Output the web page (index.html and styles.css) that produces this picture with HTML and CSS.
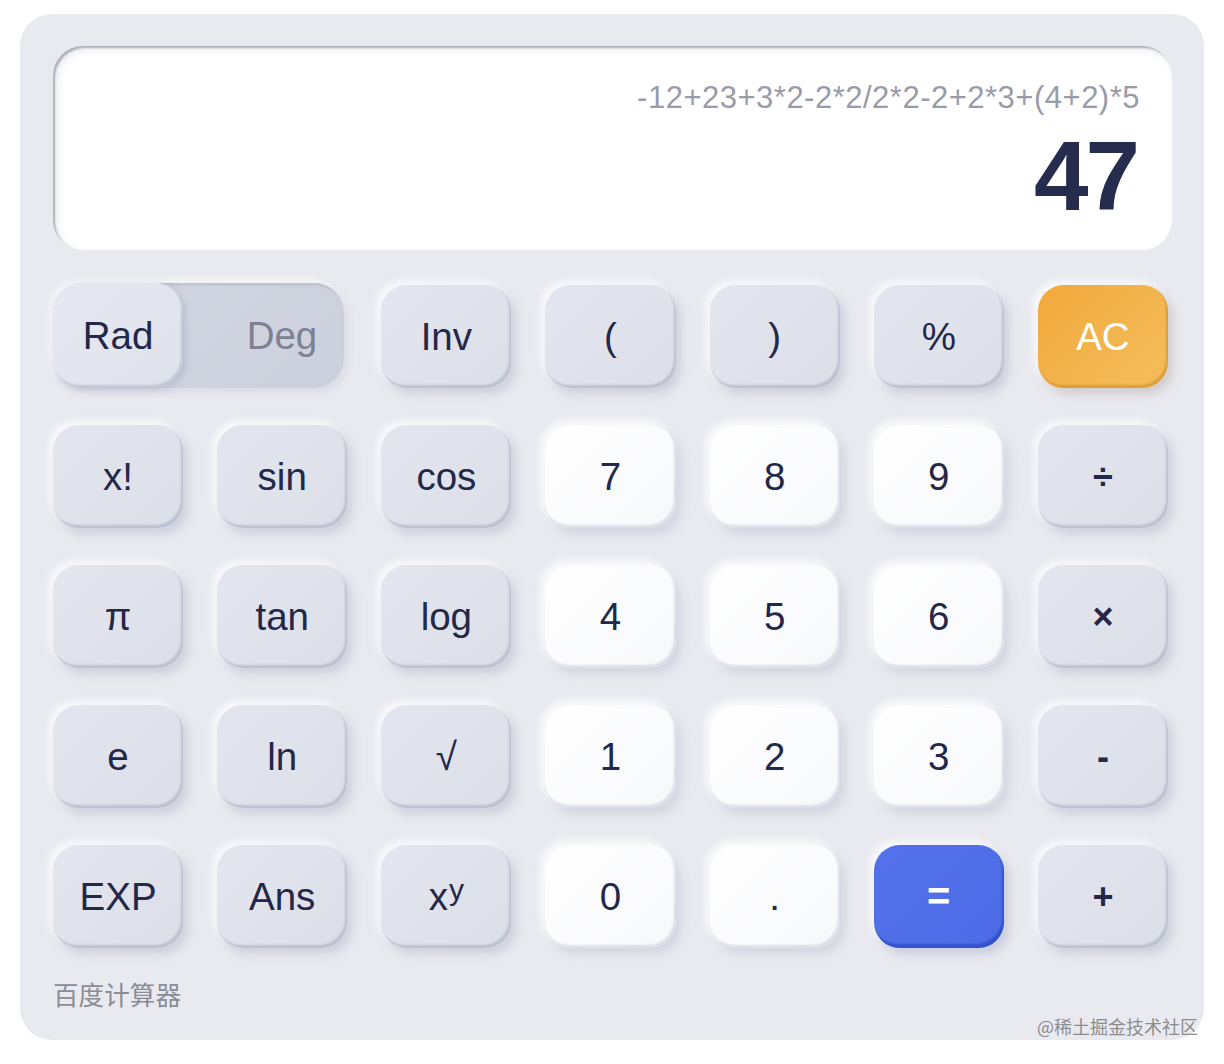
FILE: index.html
```html
<!DOCTYPE html>
<html lang="zh-CN">
<head>
<meta charset="utf-8">
<title>百度计算器</title>
<link rel="stylesheet" href="styles.css">
</head>
<body>
<div class="calc">
  <div class="display">
    <div class="expr">-12+23+3*2-2*2/2*2-2+2*3+(4+2)*5</div>
    <div class="result">47</div>
  </div>
  <div class="keys">
    <div class="toggle">
      <div class="tog-on">Rad</div>
      <div class="tog-off">Deg</div>
    </div>
    <div class="key fn">Inv</div>
    <div class="key fn">(</div>
    <div class="key fn">)</div>
    <div class="key fn">%</div>
    <div class="key ac">AC</div>

    <div class="key fn">x!</div>
    <div class="key fn">sin</div>
    <div class="key fn">cos</div>
    <div class="key num">7</div>
    <div class="key num">8</div>
    <div class="key num">9</div>
    <div class="key fn op">÷</div>

    <div class="key fn">π</div>
    <div class="key fn">tan</div>
    <div class="key fn">log</div>
    <div class="key num">4</div>
    <div class="key num">5</div>
    <div class="key num">6</div>
    <div class="key fn op">×</div>

    <div class="key fn">e</div>
    <div class="key fn">ln</div>
    <div class="key fn">√</div>
    <div class="key num">1</div>
    <div class="key num">2</div>
    <div class="key num">3</div>
    <div class="key fn op">-</div>

    <div class="key fn">EXP</div>
    <div class="key fn">Ans</div>
    <div class="key fn">x<sup>y</sup></div>
    <div class="key num">0</div>
    <div class="key num">.</div>
    <div class="key eq">=</div>
    <div class="key fn op">+</div>
  </div>
  <div class="footer">百度计算器</div>
</div>
<div class="watermark">@稀土掘金技术社区</div>
</body>
</html>
```
FILE: styles.css
```css
* { box-sizing: border-box; }
html, body { margin: 0; padding: 0; background: #ffffff; }
body {
  font-family: "Liberation Sans", Arial, "Noto Sans CJK SC", sans-serif;
  padding: 14px 20px 0 20px;
  width: 1224px;
  height: 1064px;
  position: relative;
  overflow: hidden;
}
.calc {
  width: 1184px;
  height: 1026px;
  background: #e9eaf0;
  border-radius: 32px;
  padding: 32px 32px 0 33px;
  display: flex;
  flex-direction: column;
}
.display {
  height: 204px;
  background: #ffffff;
  border-radius: 30px;
  box-shadow: inset 2px 2px 2px rgba(120, 124, 140, 0.55), inset 4px 4px 8px rgba(170, 174, 190, 0.25);
  padding: 33px 33px 0 0;
  display: flex;
  flex-direction: column;
  align-items: flex-end;
}
.expr {
  font-size: 31px;
  color: #9a9ba9;
  line-height: 38px;
  letter-spacing: 0.5px;
  margin-right: -1px;
}
.result {
  font-size: 98px;
  font-weight: bold;
  color: #262c4d;
  line-height: 100px;
  margin-top: 9px;
  letter-spacing: -3px;
  margin-right: 2px;
}
.keys {
  margin-top: 35px;
  margin-right: 4px;
  display: grid;
  grid-template-columns: repeat(7, 1fr);
  grid-auto-rows: 103px;
  column-gap: 34px;
  row-gap: 37px;
}
.key {
  border-radius: 26px;
  display: flex;
  align-items: center;
  justify-content: center;
  font-size: 38.5px;
  color: #232748;
}
.fn {
  background: linear-gradient(135deg, #e4e6ef 0%, #dcdee8 100%);
  box-shadow: inset -2px -3px 2px rgba(150, 155, 178, 0.45), 5px 6px 10px rgba(180, 184, 200, 0.5), -4px -4px 8px rgba(255, 255, 255, 0.85);
}
.num {
  background: linear-gradient(135deg, #ffffff 0%, #f7f8fb 100%);
  box-shadow: inset -2px -3px 2px rgba(170, 174, 195, 0.35), 5px 6px 10px rgba(185, 189, 205, 0.45), -4px -4px 8px rgba(255, 255, 255, 0.9);
}
.ac {
  background: linear-gradient(135deg, #f1a93c 0%, #f4be5c 100%);
  color: #ffffff;
  box-shadow: inset -2px -3px 2px rgba(200, 130, 30, 0.5), 5px 6px 10px rgba(185, 175, 170, 0.5), -4px -4px 8px rgba(255, 255, 255, 0.85);
}
.eq {
  background: linear-gradient(135deg, #5271ea 0%, #4c6be6 100%);
  color: #ffffff;
  font-size: 40px;
  font-weight: bold;
  box-shadow: inset -2px -4px 2px rgba(40, 70, 190, 0.7), 5px 6px 10px rgba(170, 175, 200, 0.5), -4px -4px 8px rgba(255, 255, 255, 0.85);
}
.op { font-size: 36px; font-weight: bold; }
.key sup { font-size: 30px; position: relative; top: -7px; vertical-align: top; line-height: 1; margin-left: 1px; }
.toggle {
  grid-column: span 2;
  margin-right: 3px;
  margin-top: -2px;
  border-radius: 30px;
  background: linear-gradient(135deg, #d5d8e3 0%, #ccd0dc 100%);
  box-shadow: inset 2px 2px 3px rgba(160, 165, 185, 0.5), 3px 4px 8px rgba(190, 194, 210, 0.4), -3px -3px 6px rgba(255, 255, 255, 0.8);
  display: flex;
  align-items: stretch;
  font-size: 38.5px;
}
.tog-on {
  width: 130px;
  border-radius: 28px;
  background: linear-gradient(135deg, #e7e9f2 0%, #dfe2eb 100%);
  box-shadow: inset -2px -3px 2px rgba(150, 155, 178, 0.4), 3px 2px 6px rgba(160, 165, 185, 0.45);
  display: flex;
  align-items: center;
  justify-content: center;
  color: #232748;
}
.tog-off {
  flex: 1;
  display: flex;
  align-items: center;
  justify-content: flex-end;
  padding-right: 27px;
  color: #7e8094;
}
.footer {
  margin-top: 30px;
  font-family: "Noto Sans CJK SC", sans-serif;
  font-size: 25.6px;
  color: #8a8c97;
  line-height: 32px;
}
.watermark {
  position: absolute;
  left: 1037px;
  top: 1014px;
  font-family: "Noto Sans CJK SC", sans-serif;
  font-size: 18px;
  color: #8c8c8f;
  line-height: 24px;
}
```
